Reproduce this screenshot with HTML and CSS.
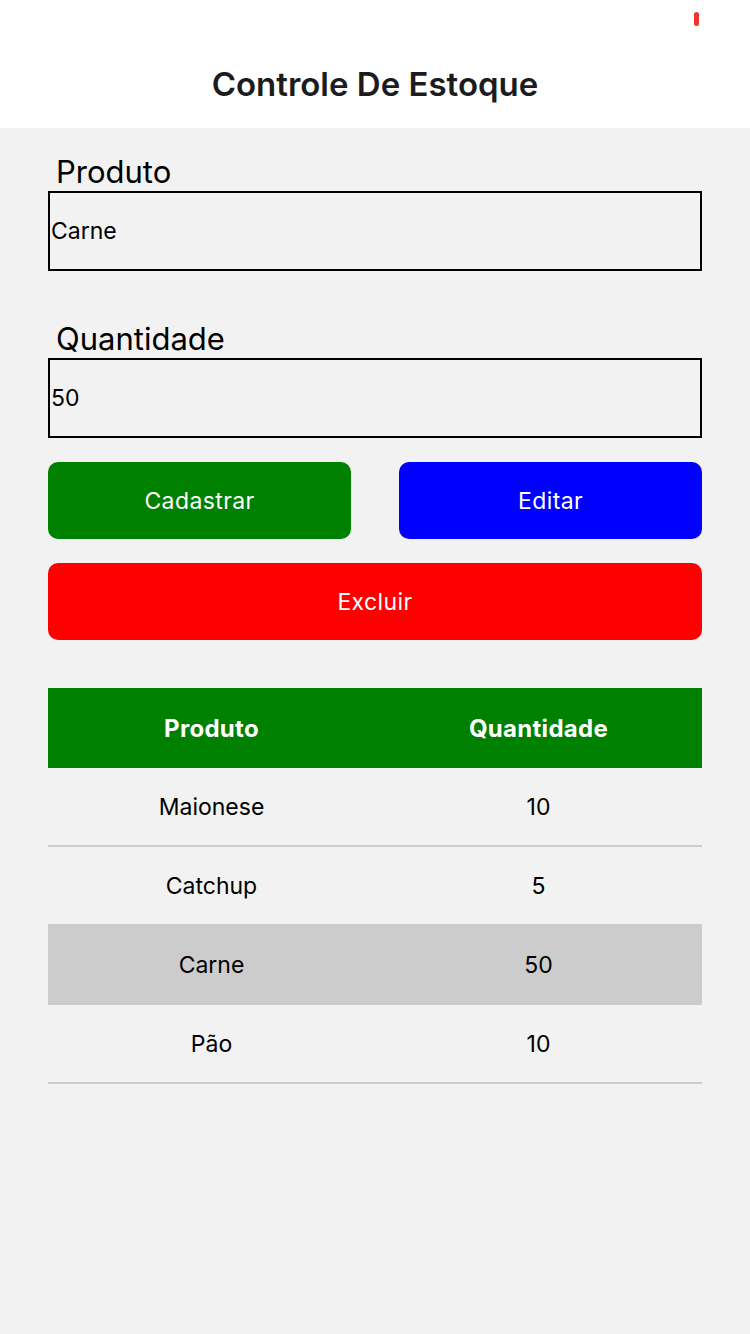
FILE: index.html
```html
<!DOCTYPE html>
<html lang="pt">
<head>
<meta charset="utf-8">
<title>Controle De Estoque</title>
<link rel="stylesheet" href="styles.css">
</head>
<body>
<header class="topbar">
  <span class="rec-dot"></span>
  <h1 class="title">Controle De Estoque</h1>
</header>
<main class="content">
  <label class="field-label">Produto</label>
  <div class="field">Carne</div>
  <label class="field-label second">Quantidade</label>
  <div class="field">50</div>
  <div class="btn-row">
    <button class="btn btn-green">Cadastrar</button>
    <button class="btn btn-blue">Editar</button>
  </div>
  <button class="btn btn-red btn-full">Excluir</button>
  <div class="table">
    <div class="row head"><div>Produto</div><div>Quantidade</div></div>
    <div class="row"><div>Maionese</div><div>10</div></div>
    <div class="row"><div>Catchup</div><div>5</div></div>
    <div class="row selected"><div>Carne</div><div>50</div></div>
    <div class="row"><div>Pão</div><div>10</div></div>
  </div>
</main>
</body>
</html>
```
FILE: styles.css
```css
* { box-sizing: border-box; }
html, body { margin: 0; padding: 0; }
body {
  width: 750px;
  min-height: 1334px;
  background: #f2f2f2;
  font-family: Inter, "Noto Sans", sans-serif;
  color: #000;
}
.topbar {
  position: relative;
  height: 128px;
  background: #fff;
  padding-top: 40px;
  display: flex;
  align-items: center;
  justify-content: center;
}
.rec-dot {
  position: absolute;
  left: 694px;
  top: 12px;
  width: 5px;
  height: 14px;
  border-radius: 3px;
  background: #f0342c;
}
.title {
  margin: 0;
  font-size: 33px;
  font-weight: 600;
  color: #1c1c1e;
  letter-spacing: 0;
}
.content {
  padding: 26px 48px 0;
  display: flex;
  flex-direction: column;
}
.field-label {
  display: block;
  margin-left: 8px;
  font-size: 31px;
  line-height: 36px;
  margin-bottom: 1px;
}
.field-label.second { margin-top: 50px; }
.field {
  height: 80px;
  border: 2px solid #000;
  display: flex;
  align-items: center;
  padding-left: 1px;
  font-size: 23px;
}
.btn-row {
  display: flex;
  gap: 48px;
  margin-top: 24px;
}
.btn {
  border: 0;
  border-radius: 10px;
  height: 77px;
  font-family: inherit;
  font-size: 23px;
  letter-spacing: 0.4px;
  color: #fff;
  padding: 0;
}
.btn-row .btn { flex: 1; }
.btn-green { background: #008000; }
.btn-blue { background: #0000ff; }
.btn-red { background: #ff0000; }
.btn-full { margin-top: 24px; width: 100%; flex: none; }
.table { margin-top: 48px; }
.row {
  display: grid;
  grid-template-columns: 1fr 1fr;
  height: 79px;
  border-bottom: 2px solid #cccccc;
  align-items: center;
  text-align: center;
  font-size: 23px;
}
.row.head {
  height: 80px;
  border-bottom: 0;
  background: #008000;
  color: #fff;
  font-weight: 700;
  font-size: 24px;
  letter-spacing: 0.3px;
}
.row.selected { background: #cccccc; }
```
